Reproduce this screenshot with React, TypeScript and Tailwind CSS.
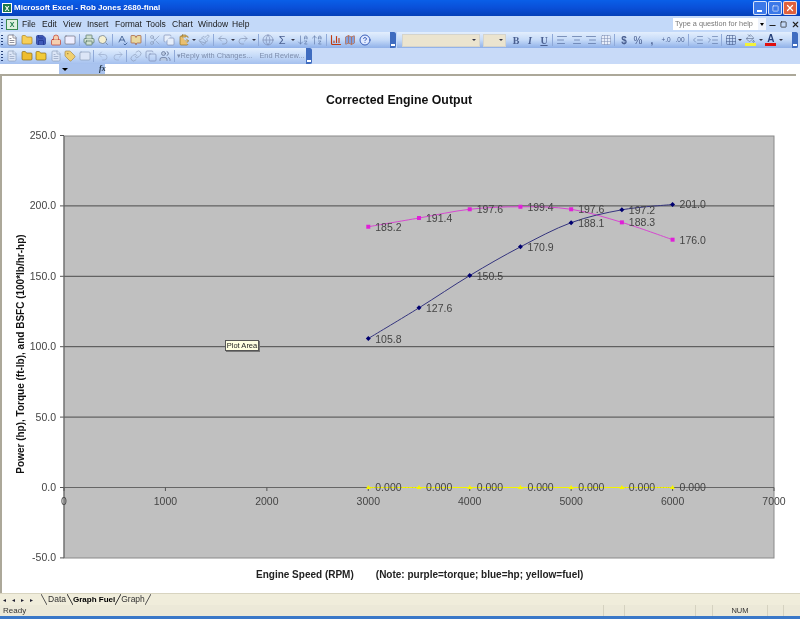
import {
  AlignCenter, AlignLeft, AlignRight, ArrowDownAZ, ArrowUpAZ, BarChart3, BookOpen, ClipboardPaste, Copy, FileText,
  Folder, Globe, Grid3x3, HelpCircle, IndentDecrease, IndentIncrease, Link, Lock, Mail, Map as MapIcon, Paintbrush,
  PaintBucket, Printer, Redo2, Save, Scissors, Search, SpellCheck, Tag, Undo2, Users, X, Minus, Square,
} from "lucide-react"
import type { ReactNode } from "react"

const font = "font-['Liberation_Sans',Arial,sans-serif]"

const Btn = ({ children, w = "w-[14.5px]" }: { children: ReactNode; w?: string }) => (
  <div className={`${w} h-full flex items-center justify-center shrink-0`}>{children}</div>
)
const Sep = () => <div className="w-[3px] h-[12px] border-l border-[#8fa9d8] shrink-0 ml-[1px]" />
const Caret = () => (
  <div className="w-[6px] h-full flex items-center justify-center shrink-0">
    <div className="border-x-[2px] border-t-[2px] border-x-transparent border-t-[#334]" />
  </div>
)
const Grip = () => (
  <div className="w-[3px] h-[12px] shrink-0 flex flex-col justify-between py-[1px] mr-[1px]">
    {[0, 1, 2, 3].map((i) => <div key={i} className="w-[2px] h-[1px] bg-[#27417a]" />)}
  </div>
)
const EndHandle = () => (
  <div className="w-[6px] h-full bg-[#3f6cc0] flex items-end justify-center pb-[2px] shrink-0 rounded-r-[2px]">
    <div className="w-[4px] h-[2px] bg-white" />
  </div>
)
const Txt = ({ children, cls = "" }: { children: ReactNode; cls?: string }) => (
  <span className={`text-[10px] text-[#4a5f90] ${cls}`}>{children}</span>
)

const TitleBar = () => (
  <div className="h-[16px] flex items-center bg-gradient-to-b from-[#0a5fe8] via-[#0a4fd8] to-[#0440b8] pl-[2px] pr-[3px]">
    <div className="w-[10px] h-[10px] bg-[#1d7a4a] border border-white flex items-center justify-center text-[7px] leading-none text-white font-bold">X</div>
    <span className="ml-[2px] text-[8px] font-bold text-white">Microsoft Excel - Rob Jones 2680-final</span>
    <div className="ml-auto flex gap-[1px]">
      <div className="w-[14px] h-[14px] rounded-[2px] bg-[#3b78e8] border border-white/80 flex items-end pl-[3px] pb-[2px]"><div className="w-[5px] h-[2px] bg-white" /></div>
      <div className="w-[14px] h-[14px] rounded-[2px] bg-[#3b78e8] border border-white/80 flex items-center justify-center"><Square size={7} color="white" strokeWidth={2} /></div>
      <div className="w-[14px] h-[14px] rounded-[2px] bg-[#e0603c] border border-white/80 flex items-center justify-center"><X size={10} color="white" strokeWidth={3} /></div>
    </div>
  </div>
)

const MenuBar = () => (
  <div className="h-[16px] flex items-center bg-[#c3d9f9] relative">
    <div className="w-[4px] pl-[1px]"><Grip /></div>
    <div className="w-[12px] h-[11px] ml-[2px] bg-[#dff0df] border border-[#3a8a50] text-[7px] leading-none font-bold text-[#1d7a4a] flex items-center justify-center">X</div>
    <div className="flex text-[8.5px] text-[#1a1a1a] ml-[4px]">
      {[["File", "w-[20px]"], ["Edit", "w-[21px]"], ["View", "w-[24px]"], ["Insert", "w-[28px]"], ["Format", "w-[31px]"], ["Tools", "w-[26px]"], ["Chart", "w-[26px]"], ["Window", "w-[34px]"], ["Help", "w-[20px]"]].map(([m, w]) => (
        <span key={m} className={w}>{m}</span>
      ))}
    </div>
    <div className="ml-auto flex items-center h-[12px]">
      <div className="w-[85px] h-[12px] bg-white text-[7.3px] text-[#777] pl-[2px] leading-[12px] whitespace-nowrap">Type a question for help</div>
      <div className="w-[8px] h-full bg-[#eef3fc] flex items-center justify-center"><div className="border-x-[2px] border-t-[3px] border-x-transparent border-t-black" /></div>
      <Minus size={9} strokeWidth={3} className="ml-[2px] mt-[3px]" color="#222" />
      <Square size={7} strokeWidth={2.5} className="ml-[3px]" color="#222" />
      <X size={9} strokeWidth={3} className="ml-[4px]" color="#222" />
    </div>
  </div>
)

const s = 12
const Toolbar1 = () => (
  <div className="h-[16px] flex bg-[#c3d9f9]">
    <div className="flex items-center w-[396px] h-full bg-gradient-to-b from-[#e3eefd] via-[#c5daf8] to-[#8fb0e8] pl-[1px] rounded-l-[2px]">
      <Grip />
      <Btn><FileText size={s} color="#556" fill="#fff" strokeWidth={1.3} /></Btn>
      <Btn><Folder size={s} color="#a87a10" fill="#f6cf58" strokeWidth={1.3} /></Btn>
      <Btn><Save size={s} color="#1b2f8a" fill="#3f59b8" strokeWidth={1.3} /></Btn>
      <Btn><Lock size={s} color="#c03020" fill="#f5d0b0" strokeWidth={1.3} /></Btn>
      <Btn><Mail size={s} color="#667" fill="#eef" strokeWidth={1.3} /></Btn>
      <Sep />
      <Btn><Printer size={s} color="#4a6a5a" fill="#cfe0d0" strokeWidth={1.3} /></Btn>
      <Btn><Search size={s} color="#5a6a80" fill="#f5f0d0" strokeWidth={1.3} /></Btn>
      <Sep />
      <Btn><SpellCheck size={s} color="#2a4a80" strokeWidth={1.5} /></Btn>
      <Btn><BookOpen size={s} color="#a05030" fill="#e8d8a0" strokeWidth={1.3} /></Btn>
      <Sep />
      <Btn><Scissors size={s} color="#8a9ab8" strokeWidth={1.3} /></Btn>
      <Btn><Copy size={s} color="#7a8ab0" fill="#e6eefa" strokeWidth={1.3} /></Btn>
      <Btn><ClipboardPaste size={s} color="#8a6a20" fill="#eac070" strokeWidth={1.3} /></Btn>
      <Caret />
      <Btn><Paintbrush size={s} color="#8a9ab8" strokeWidth={1.3} /></Btn>
      <Sep />
      <Btn><Undo2 size={s} color="#8a9ab8" strokeWidth={1.5} /></Btn>
      <Caret />
      <Btn><Redo2 size={s} color="#8a9ab8" strokeWidth={1.5} /></Btn>
      <Caret />
      <Sep />
      <Btn><Globe size={s} color="#7a8ab0" strokeWidth={1.3} /></Btn>
      <Btn><span className="text-[11px] leading-none text-[#4a5f90]">Σ</span></Btn>
      <Caret />
      <Btn><ArrowDownAZ size={s} color="#5f77a5" strokeWidth={1.3} /></Btn>
      <Btn><ArrowUpAZ size={s} color="#5f77a5" strokeWidth={1.3} /></Btn>
      <Sep />
      <Btn><BarChart3 size={s} color="#c03a10" strokeWidth={2.2} /></Btn>
      <Btn><MapIcon size={s} color="#c06030" fill="#80a0e0" strokeWidth={1.3} /></Btn>
      <Btn><HelpCircle size={s} color="#2a50b0" fill="#dfe9ff" strokeWidth={1.8} /></Btn>
      <div className="ml-auto h-full"><EndHandle /></div>
    </div>
    <div className="w-[401px] flex items-center h-full bg-gradient-to-b from-[#e3eefd] via-[#c5daf8] to-[#8fb0e8] min-w-0 ml-[1px]">
      <div className="w-[5px] shrink-0" />
      <div className="w-[78px] h-[13px] bg-[#ebe4cf] border border-[#d5d4cc] flex items-center justify-end pr-[2px]"><Caret /></div>
      <div className="w-[23px] h-[13px] ml-[3px] bg-[#ebe4cf] border border-[#d5d4cc] flex items-center justify-end pr-[1px]"><Caret /></div>
      <div className="w-[1px] shrink-0" />
      <Btn w="w-[14px] ml-[2px]"><Txt cls="font-bold font-['Liberation_Serif',serif]">B</Txt></Btn>
      <Btn w="w-[14px]"><Txt cls="italic font-['Liberation_Serif',serif] font-bold">I</Txt></Btn>
      <Btn w="w-[14px]"><Txt cls="underline font-['Liberation_Serif',serif] font-bold">U</Txt></Btn>
      <Sep />
      <Btn><AlignLeft size={s} color="#5f77a5" strokeWidth={1.5} /></Btn>
      <Btn><AlignCenter size={s} color="#5f77a5" strokeWidth={1.5} /></Btn>
      <Btn><AlignRight size={s} color="#5f77a5" strokeWidth={1.5} /></Btn>
      <Btn><Grid3x3 size={s} color="#7a8ab0" fill="#e8eefa" strokeWidth={1} /></Btn>
      <Sep />
      <Btn w="w-[14px]"><Txt cls="font-bold">$</Txt></Btn>
      <Btn w="w-[14px]"><Txt>%</Txt></Btn>
      <Btn w="w-[14px]"><Txt cls="font-bold">,</Txt></Btn>
      <Btn w="w-[14px]"><span className="text-[6.5px] text-[#4a5f90]">+.0</span></Btn>
      <Btn w="w-[14px]"><span className="text-[6.5px] text-[#4a5f90]">.00</span></Btn>
      <Sep />
      <Btn><IndentDecrease size={s} color="#5f77a5" strokeWidth={1.3} /></Btn>
      <Btn><IndentIncrease size={s} color="#5f77a5" strokeWidth={1.3} /></Btn>
      <Sep />
      <Btn w="w-[13px]"><Grid3x3 size={s} color="#4a5f90" strokeWidth={1.2} /></Btn>
      <Caret />
      <Btn><div className="flex flex-col items-center"><PaintBucket size={9} color="#506080" strokeWidth={1.5} /><div className="w-[11px] h-[3px] bg-[#f2f23a]" /></div></Btn>
      <Caret />
      <Btn><div className="flex flex-col items-center"><span className="text-[10px] leading-[9px] font-bold text-[#27417a]">A</span><div className="w-[11px] h-[3px] bg-[#e01010]" /></div></Btn>
      <Caret />
      <div className="ml-auto h-full"><EndHandle /></div>
    </div>
  </div>
)

const Toolbar2 = () => (
  <div className="h-[16px] flex bg-[#c8daf8]">
    <div className="flex items-center w-[312px] h-full bg-gradient-to-b from-[#e3eefd] via-[#c5daf8] to-[#a5c0ee] pl-[1px]">
      <Grip />
      <Btn><FileText size={s} color="#8a9ab8" fill="#dce6f7" strokeWidth={1.3} /></Btn>
      <Btn><Folder size={s} color="#806010" fill="#eebd30" strokeWidth={1.3} /></Btn>
      <Btn><Folder size={s} color="#806010" fill="#f2ca38" strokeWidth={1.3} /></Btn>
      <Btn><FileText size={s} color="#8a9ab8" fill="#dce6f7" strokeWidth={1.3} /></Btn>
      <Btn><Tag size={s} color="#a08040" fill="#f0d070" strokeWidth={1.3} /></Btn>
      <Btn><Mail size={s} color="#8a9ab8" fill="#dce6f7" strokeWidth={1.3} /></Btn>
      <Sep />
      <Btn><Undo2 size={s} color="#98a8c8" strokeWidth={1.3} /></Btn>
      <Btn><Redo2 size={s} color="#98a8c8" strokeWidth={1.3} /></Btn>
      <Sep />
      <Btn><Link size={s} color="#8a9ab8" strokeWidth={1.3} /></Btn>
      <Btn><Copy size={s} color="#7a8ab0" strokeWidth={1.3} /></Btn>
      <Btn><Users size={s} color="#5a6a90" fill="#b8c8e0" strokeWidth={1.3} /></Btn>
      <Sep />
      <span className="text-[7.4px] text-[#7c8cab] whitespace-nowrap flex gap-[7px]"><span>▾Reply with Changes...</span><span>End Review...</span></span>
      <div className="ml-auto h-full"><EndHandle /></div>
    </div>
  </div>
)

const FormulaBar = () => (
  <div className="h-[10px] flex bg-white">
    <div className="w-[59px]" />
    <div className="w-[46px] bg-[#a9c3ef] flex items-center">
      <div className="ml-[3px] border-x-[3px] border-t-[3px] border-x-transparent border-t-black" />
      <span className="ml-[31px] text-[8px] leading-none font-bold italic font-['Liberation_Serif',serif] text-[#234]">fx</span>
    </div>
  </div>
)

const torque = [185.2, 191.4, 197.6, 199.4, 197.6, 188.3, 176.0]
const hp = [105.8, 127.6, 150.5, 170.9, 188.1, 197.2, 201.0]
const rpm = [3000, 3500, 4000, 4500, 5000, 5500, 6000]
const X0 = (r: number) => 64 + r * 0.10143
const Y0 = (v: number) => 487.5 - v * 1.408

// smooth line through the points, like excel's smoothed series
const smooth = (pts: [number, number][]) => {
  let d = `M${pts[0][0]} ${pts[0][1]}`
  for (let i = 0; i < pts.length - 1; i++) {
    const p0 = pts[Math.max(i - 1, 0)], p1 = pts[i], p2 = pts[i + 1], p3 = pts[Math.min(i + 2, pts.length - 1)]
    d += ` C${p1[0] + (p2[0] - p0[0]) / 6} ${p1[1] + (p2[1] - p0[1]) / 6} ${p2[0] - (p3[0] - p1[0]) / 6} ${p2[1] - (p3[1] - p1[1]) / 6} ${p2[0]} ${p2[1]}`
  }
  return d
}

const Chart = () => {
  const ticks = [250, 200, 150, 100, 50, 0, -50]
  const xs = [0, 1000, 2000, 3000, 4000, 5000, 6000, 7000]
  return (
    <svg viewBox="0 120 800 450" className="w-[800px] max-w-none h-[450px] block -ml-[2px] shrink-0" fontFamily="Liberation Sans, Arial, sans-serif">
      <rect x="64" y="136" width="710" height="422" fill="#c0c0c0" stroke="#8a8a8a" />
      {ticks.map((t) => (
        <g key={t}>
          {t !== 250 && t !== -50 && <line x1="64" x2="774" y1={Y0(t)} y2={Y0(t)} stroke={t === 0 ? "#666" : "#4a4a4a"} />}
          <line x1="60" x2="64" y1={Y0(t)} y2={Y0(t)} stroke="#555" />
          <text x="56" y={Y0(t) + 3.5} textAnchor="end" fontSize="10.5" fill="#444">{t.toFixed(1)}</text>
        </g>
      ))}
      <line x1="64" x2="64" y1="136" y2="558" stroke="#666" />
      {xs.map((x) => (
        <g key={x}>
          <line x1={X0(x)} x2={X0(x)} y1="487.5" y2="491" stroke="#555" />
          <text x={X0(x)} y="505" textAnchor="middle" fontSize="10.5" fill="#444">{x}</text>
        </g>
      ))}
      <text transform="translate(23.5 354) rotate(-90)" textAnchor="middle" fontSize="10" fontWeight="bold" fill="#111">Power (hp), Torque (ft-lb), and BSFC (100*lb/hr-hp)</text>

      <path d={smooth(rpm.map((r) => [X0(r), Y0(0)]))} fill="none" stroke="#f4f400" />
      <path d={smooth(rpm.map((r, i) => [X0(r), Y0(torque[i])]))} fill="none" stroke="#d648d0" />
      <path d={smooth(rpm.map((r, i) => [X0(r), Y0(hp[i])]))} fill="none" stroke="#34347e" />

      {rpm.map((r, i) => (
        <g key={r}>
          <polygon points={`${X0(r)},${Y0(0) - 2.5} ${X0(r) + 2.5},${Y0(0) + 1.5} ${X0(r) - 2.5},${Y0(0) + 1.5}`} fill="#f4f400" />
          <text x={X0(r) + 7} y={Y0(0) + 3.5} fontSize="10.5" fill="#444">0.000</text>
          <rect x={X0(r) - 2} y={Y0(torque[i]) - 2} width="4" height="4" fill="#e020d8" />
          <text x={X0(r) + 7} y={Y0(torque[i]) + 4} fontSize="10.5" fill="#444">{torque[i].toFixed(1)}</text>
          <polygon points={`${X0(r)},${Y0(hp[i]) - 2.5} ${X0(r) + 2.5},${Y0(hp[i])} ${X0(r)},${Y0(hp[i]) + 2.5} ${X0(r) - 2.5},${Y0(hp[i])}`} fill="#000070" />
          <text x={X0(r) + 7} y={Y0(hp[i]) + 4} fontSize="10.5" fill="#444">{hp[i].toFixed(1)}</text>
        </g>
      ))}
    </svg>
  )
}

const SheetTabs = () => (
  <div className="h-[12px] flex items-center bg-[#f0eddb] border-t border-[#d8d4c0] text-[8.5px] text-[#333] whitespace-nowrap">
    <div className="flex w-[41px] pl-[3px] gap-[6px] text-[6px] leading-none text-[#223] shrink-0">
      <span>◂</span><span>◂</span><span>▸</span><span>▸</span>
    </div>
    <svg width="6" height="11" className="shrink-0"><path d="M0 0L6 11" stroke="#555" fill="none" /></svg>
    <span className="w-[20px] text-center">Data</span>
    <svg width="6" height="11" className="shrink-0"><path d="M0 0L6 11" stroke="#333" fill="none" /></svg>
    <span className="w-[42px] text-center text-[8px] font-bold text-black">Graph Fuel</span>
    <svg width="6" height="11" className="shrink-0"><path d="M0 11L6 0" stroke="#333" fill="none" /></svg>
    <span className="w-[24px] text-center">Graph</span>
    <svg width="6" height="11" className="shrink-0"><path d="M0 11L6 0" stroke="#555" fill="none" /></svg>
  </div>
)

const StatusBar = () => (
  <div className="h-[11px] flex items-center bg-[#ece9d8] text-[8px] text-[#333] pl-[3px]">
    <span>Ready</span>
    <div className="ml-auto flex h-full text-[7.5px]">
      {[["w-[21px]", ""], ["w-[71px]", ""], ["w-[17px]", ""], ["w-[55px]", "NUM"], ["w-[16px]", ""], ["w-[13px]", ""]].map(([w, t], i) => (
        <div key={i} className={`${w} border-l border-[#d5d2c0] flex items-center justify-center`}>{t}</div>
      ))}
      <div className="w-[4px]" />
    </div>
  </div>
)

export default function App() {
  return (
    <div className={`w-[800px] h-[619px] flex flex-col overflow-hidden bg-white blur-[0.3px] ${font}`}>
      <TitleBar />
      <MenuBar />
      <Toolbar1 />
      <Toolbar2 />
      <FormulaBar />
      <div className="h-[2px] bg-[#aca899] mr-[4px]" />
      <div className="flex-1 border-l-2 border-[#aca899] flex flex-col relative min-h-0">
        <div className="h-[44px] flex items-center justify-center text-[12.3px] font-bold text-[#111] pt-[4px] pr-[4px] shrink-0">Corrected Engine Output</div>
        <Chart />
        <div className="flex-1 text-[10px] font-bold text-[#222] flex pl-[254px] -mt-[3px] gap-[22px] whitespace-nowrap">
          <span>Engine Speed (RPM)</span>
          <span>(Note: purple=torque; blue=hp; yellow=fuel)</span>
        </div>
        <div className="absolute left-[223px] top-[264px] w-[34px] h-[11px] bg-[#ffffe1] border border-[#555] text-[7.5px] leading-[9px] text-center text-[#222] shadow-[1px_1px_0_#777]">Plot Area</div>
      </div>
      <SheetTabs />
      <StatusBar />
      <div className="h-[3px] bg-[#3a78c8]" />
    </div>
  )
}
